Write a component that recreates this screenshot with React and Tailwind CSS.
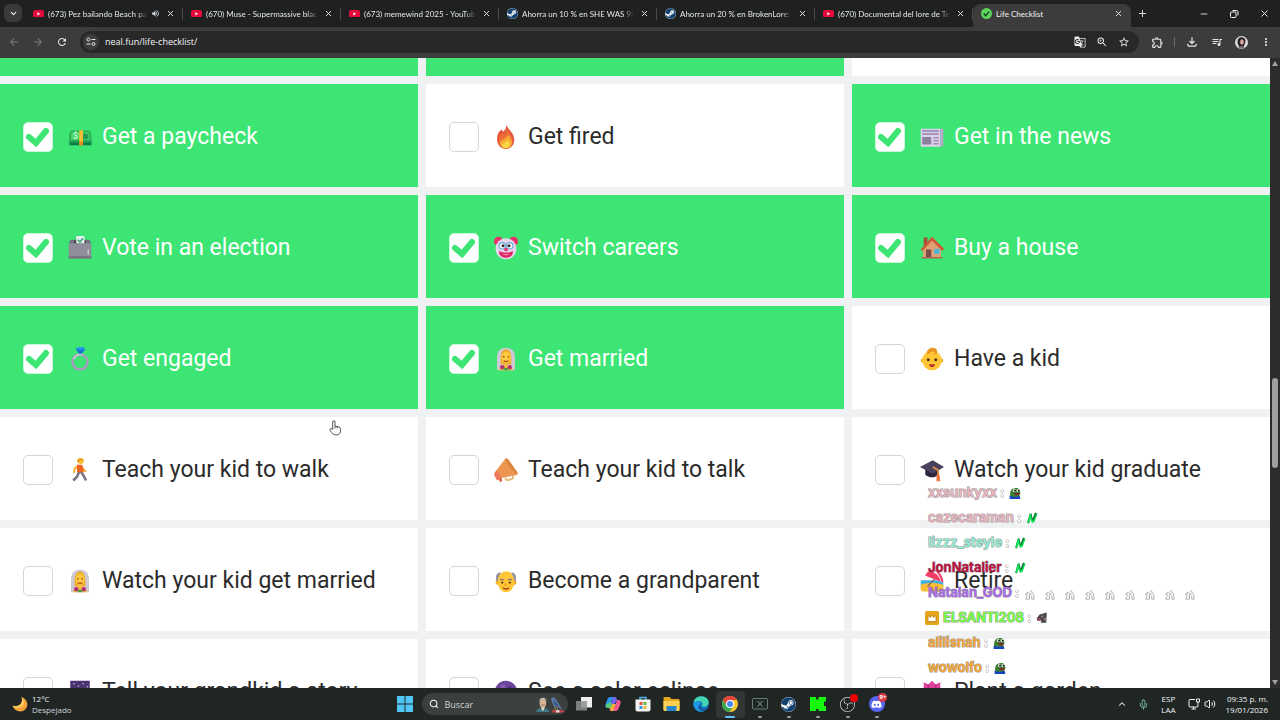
import { useState } from 'react'
import { ChevronDown, ChevronUp, Mic, Minus, Plus, Search, Volume2, X } from 'lucide-react'
import { FaDiscord, FaSteam } from 'react-icons/fa'
import {
  MdArrowBack,
  MdArrowForward,
  MdGTranslate,
  MdMoreVert,
  MdOutlineExtension,
  MdOutlineFileDownload,
  MdOutlineQueueMusic,
  MdRefresh,
  MdStarBorder,
  MdVolumeUp,
  MdZoomIn,
} from 'react-icons/md'
import { SiObsstudio } from 'react-icons/si'

const TABS = [
  { icon: 'youtube', title: '(673) Pez bailando Beach pa', audio: true },
  { icon: 'youtube', title: '(670) Muse - Supermassive blac' },
  { icon: 'youtube', title: '(673) memewind 2025 - YouTub' },
  { icon: 'steam', title: 'Ahorra un 10 % en SHE WAS 98' },
  { icon: 'steam', title: 'Ahorra un 20 % en BrokenLore:' },
  { icon: 'youtube', title: '(670) Documental del lore de Te' },
  { icon: 'check', title: 'Life Checklist', active: true },
]

const ITEMS = [
  { emoji: 'money', label: 'Get a paycheck', done: true },
  { emoji: 'fire', label: 'Get fired' },
  { emoji: 'news', label: 'Get in the news', done: true },
  { emoji: 'ballot', label: 'Vote in an election', done: true },
  { emoji: 'clown', label: 'Switch careers', done: true },
  { emoji: 'house', label: 'Buy a house', done: true },
  { emoji: 'ring', label: 'Get engaged', done: true },
  { emoji: 'bride', label: 'Get married', done: true },
  { emoji: 'baby', label: 'Have a kid' },
  { emoji: 'walk', label: 'Teach your kid to walk' },
  { emoji: 'megaphone', label: 'Teach your kid to talk' },
  { emoji: 'graduate', label: 'Watch your kid graduate' },
  { emoji: 'bride', label: 'Watch your kid get married' },
  { emoji: 'grandpa', label: 'Become a grandparent' },
  { emoji: 'beach', label: 'Retire' },
  { emoji: 'night', label: 'Tell your grandkid a story' },
  { emoji: 'eclipse', label: 'See a solar eclipse' },
  { emoji: 'tulip', label: 'Plant a garden' },
]

const CHAT = [
  { name: 'xxsunkyxx', color: 'text-[#e8b4c0]', emotes: ['frog'] },
  { name: 'cazecaraman', color: 'text-[#e8b4c0]', emotes: ['bolt'] },
  { name: 'lizzz_steyle', color: 'text-[#93ebd3]', emotes: ['bolt'] },
  { name: 'JonNatalier', color: 'text-[#bc1040]', emotes: ['bolt'] },
  { name: 'Natalan_GOD', color: 'text-[#a96be6]', emotes: Array(9).fill('dance') },
  { name: 'ELSANTI208', color: 'text-[#75fd46]', emotes: ['wolf'], badge: true },
  { name: 'alilisnah', color: 'text-[#f2a73a]', emotes: ['frog'] },
  { name: 'wowolfo', color: 'text-[#f2a73a]', emotes: ['frog'] },
]

const EMOJI = {
  money: (
    <>
      <path d="M2 12h29v15H2z" fill="#0b7a45" />
      <path d="M3 7h27l2 15H1z" fill="#35c45f" />
      <path d="M4 9h24l1 11H3z" fill="#4ad873" stroke="#239a4b" />
      <circle cx="23" cy="15" r="4" fill="#249a55" />
      <text x="7" y="19" fontSize="11" fill="#d8ffdf" fontFamily="Roboto">$</text>
      <path d="M15 7h5v20h-5z" fill="#f5bd35" />
      <path d="M15 22h5v5h-5z" fill="#e68a22" />
      <path d="M1 22h14v2H1zM20 22h12v2H20z" fill="#1d9b52" />
    </>
  ),
  fire: (
    <>
      <path d="M17 0c1 6 10 10 10 20 0 7-5 12-11 12S4 27 4 19c0-6 2-10 6-13l2 3c3-2 4-5 5-9z" fill="#e4573f" />
      <path d="M17 5c1 5 8 9 8 16 0 6-4 10-9 10s-10-3-10-9c0-4 2-7 5-11l3 2z" fill="#ee7038" />
      <path d="M19 13c2 3 5 7 5 10 0 5-3 8-8 8s-8-3-8-7c0-5 10-6 11-11z" fill="#f8a834" />
      <path d="M18 20c2 2 3 4 3 6 0 3-2 5-5 5s-5-2-5-4c0-3 6-4 7-7z" fill="#fdd545" />
    </>
  ),
  news: (
    <>
      <path d="M1 5h26v24H1z" fill="#ddd0ec" />
      <path d="M27 5h4v22l-2 2h-2z" fill="#b9a9cb" />
      <path d="M3 8h22M3 12h22" stroke="#9182a6" strokeWidth="2" />
      <path d="M3 16h12v10H3z" fill="#8d829e" />
      <path d="M18 17h7M18 21h7M18 25h7" stroke="#9d90b0" strokeWidth="2" />
    </>
  ),
  ballot: (
    <>
      <path d="M1 10 3 5h26l2 5z" fill="#777181" />
      <path d="M8 6h16v4H8z" fill="#47424f" />
      <path d="M11 0h11v10H11z" fill="#e9edf3" />
      <path d="m13 5 3 3 4-5" fill="none" stroke="#26a269" strokeWidth="2" />
      <path d="M1 10h30v20H1z" fill="#918c99" />
      <path d="M1 27h30v3H1z" fill="#77717f" />
      <path d="M26 18h2v7h-2z" fill="#c8c4cf" />
    </>
  ),
  clown: (
    <>
      <circle cx="6" cy="7" r="6" fill="#e93169" />
      <circle cx="26" cy="7" r="6" fill="#e93169" />
      <circle cx="16" cy="17" r="14" fill="#e7d5ee" />
      <circle cx="11" cy="13" r="5" fill="#64a9d8" />
      <circle cx="21" cy="13" r="5" fill="#64a9d8" />
      <circle cx="11" cy="13" r="3.5" fill="#fff" />
      <circle cx="21" cy="13" r="3.5" fill="#fff" />
      <circle cx="12" cy="13" r="2" fill="#38252e" />
      <circle cx="20" cy="13" r="2" fill="#38252e" />
      <circle cx="16" cy="18" r="2.5" fill="#ec356d" />
      <path d="M7 20c4 3 14 3 18 0 1 5-3 9-9 9s-10-4-9-9z" fill="#df2561" />
      <path d="M11 24c3 1 7 1 10 0-1 2-9 2-10 0z" fill="#fff" />
    </>
  ),
  house: (
    <>
      <path d="M5 2h5v11H5z" fill="#a84c3d" />
      <path d="M4 15 16 4l12 12v13H4z" fill="#dfa174" />
      <path d="M16 1 32 17l-2 3L16 6 3 20l-2-2z" fill="#cf5637" />
      <path d="M8 18h7v11H8z" fill="#7c4b4a" />
      <path d="M19 17h7v7h-7z" fill="#4cb5dc" />
      <path d="M2 28h28v2H2z" fill="#a96554" />
    </>
  ),
  ring: (
    <>
      <circle cx="16" cy="20" r="10" fill="none" stroke="#a99bbd" strokeWidth="3.5" />
      <path d="M8 16a10 10 0 0 1 11-6" fill="none" stroke="#ddd2ec" strokeWidth="2" />
      <path d="m10 2 4-2h7l2 3-5 6h-3z" fill="#249be8" />
      <path d="m10 2 5 2 8-1-5 6h-3z" fill="#1474cc" />
    </>
  ),
  bride: (
    <>
      <path d="M4 31V14C4 5 9 1 16 1s12 4 12 13v17z" fill="#cfc8d3" />
      <path d="M9 14c0-6 3-11 7-11s7 5 7 11v9H9z" fill="#edaa27" />
      <ellipse cx="16" cy="14" rx="6" ry="8" fill="#ffc83d" />
      <circle cx="13" cy="13" r="1" fill="#59331f" />
      <circle cx="19" cy="13" r="1" fill="#59331f" />
      <path d="M13 18c2 2 4 2 6 0" fill="none" stroke="#b34a1f" strokeWidth="1.5" />
      <path d="M7 31c0-5 4-8 9-8s9 3 9 8z" fill="#f5bd3a" />
      <circle cx="11" cy="27" r="3" fill="#b13573" />
      <circle cx="21" cy="27" r="3" fill="#b13573" />
      <path d="M12 28h8l-2 3h-4z" fill="#4b9c48" />
    </>
  ),
  baby: (
    <>
      <circle cx="4" cy="18" r="3" fill="#f6ab28" />
      <circle cx="28" cy="18" r="3" fill="#f6ab28" />
      <circle cx="16" cy="18" r="13" fill="#ffc636" />
      <path d="M9 9c-1-9 14-11 14-3 0 5-7 5-7 1 0 3 3 3 4 1-1-3-6-3-7 1z" fill="#e99620" />
      <circle cx="11" cy="17" r="2" fill="#50301f" />
      <circle cx="21" cy="17" r="2" fill="#50301f" />
      <path d="M12 23h8c0 5-8 5-8 0z" fill="#b9322e" />
    </>
  ),
  walk: (
    <>
      <path d="m15 18-3 7-5 5M17 18l4 6 3 6" fill="none" stroke="#7b7488" strokeWidth="3.5" />
      <path d="m14 10-5 4-1 6M18 11l3 5 3 2" fill="none" stroke="#f4a62a" strokeWidth="2.5" />
      <path d="M12 9h7l2 10h-9z" fill="#ef6323" />
      <circle cx="17" cy="4" r="4" fill="#ffc338" />
      <path d="M12 4c0-5 9-5 9 0l-5-1-2 4z" fill="#ed9a22" />
    </>
  ),
  megaphone: (
    <>
      <path d="M15 26c1 4 2 4 5 3l4-1q2-1 1-4" fill="none" stroke="#e7bd79" strokeWidth="2.5" />
      <path d="M15 1q2-1 4 1l12 17q1 3-2 4L8 27 2 18z" fill="#ec9650" />
      <path d="M15 1q2-1 4 1l12 17q1 2 0 3C24 18 18 10 15 1z" fill="#d9853f" />
      <path d="M0 22c1-4 3-5 5-5l5 9-6 4z" fill="#ee7859" />
      <path d="m6 28 2 4 3-1-1-5z" fill="#d76747" />
    </>
  ),
  graduate: (
    <>
      <path d="M7 13v9c4 5 14 5 18 0v-9z" fill="#2c253b" />
      <path d="M0 12 17 3l15 9-15 9z" fill="#49405b" />
      <path d="m17 12 7 4v8" fill="none" stroke="#f39345" strokeWidth="2" />
      <path d="M22 22h4l1 9h-5z" fill="#ed7941" />
    </>
  ),
  grandpa: (
    <>
      <circle cx="5" cy="18" r="3" fill="#f6ab28" />
      <circle cx="27" cy="18" r="3" fill="#f6ab28" />
      <path d="M3 16C1 7 6 4 9 5l-2 12zM29 16c2-9-3-12-6-11l2 12z" fill="#9b93a4" />
      <ellipse cx="16" cy="17" rx="11" ry="14" fill="#ffc636" />
      <path d="M8 15c1-2 4-2 5 0M19 15c1-2 4-2 5 0" fill="none" stroke="#8e7c7c" strokeWidth="2" />
      <circle cx="11" cy="18" r="1.5" fill="#50301f" />
      <circle cx="21" cy="18" r="1.5" fill="#50301f" />
      <path d="M15 19c-1 3 1 3 2 2" fill="none" stroke="#e58e1c" strokeWidth="1.5" />
      <path d="M12 25c2 2 6 2 8 0" fill="none" stroke="#a9401f" strokeWidth="2" />
    </>
  ),
  beach: (
    <>
      <path d="M1 15h30v10H1z" fill="#3dafe0" />
      <path d="M1 21c8-3 20-3 30 0v6q0 3-3 3H4q-3 0-3-3z" fill="#fbbf36" />
      <path d="m10 23 12-12" stroke="#8b6c66" strokeWidth="2" />
      <path d="M7 9C11-2 28-3 31 18z" fill="#f33d64" />
      <path d="M12 3c7 0 14 6 15 13l4 2C30 10 25 3 19 1z" fill="#f9e7ee" />
      <path d="M19 1c7 2 12 9 12 17l-3-2C27 10 24 5 19 1z" fill="#f33d64" />
    </>
  ),
  night: (
    <>
      <path d="M3 1h26v30H3z" fill="#4b3270" />
      <path d="M3 14h26v17H3z" fill="#342458" />
      <g fill="#d4bdf0">
        <circle cx="8" cy="5" r="1" />
        <circle cx="14" cy="8" r="1" />
        <circle cx="20" cy="5" r="1" />
        <circle cx="26" cy="9" r="1" />
        <circle cx="9" cy="12" r="1" />
        <circle cx="20" cy="12" r="1" />
      </g>
    </>
  ),
  eclipse: (
    <>
      <circle cx="16" cy="16" r="15" fill="#6d449b" />
      <circle cx="12" cy="9" r="3" fill="#875bb5" />
      <circle cx="21" cy="12" r="4" fill="#5c3788" />
    </>
  ),
  tulip: (
    <>
      <path d="M16 18v14" stroke="#3fa34d" strokeWidth="3" />
      <path d="M5 3l6 3 5-5 5 5 6-3v11c0 6-5 9-11 9S5 20 5 14z" fill="#e0409c" />
      <path d="M11 6v12M21 6v12" stroke="#b82a83" strokeWidth="2" />
    </>
  ),
}

const EMOTES = {
  frog: (
    <>
      <path d="M2 16c-1-7 1-14 8-14 6-2 9 3 9 8l-3 8H4z" fill="#3f7d35" />
      <circle cx="9" cy="6" r="2.5" fill="#e8efe4" />
      <circle cx="15" cy="6" r="2.5" fill="#e8efe4" />
      <circle cx="10" cy="6" r="1.5" />
      <circle cx="16" cy="6" r="1.5" />
      <path d="M8 10h10c0 5-8 6-10 0z" fill="#7d2a2e" />
      <path d="M1 14c5 3 12 3 17 1l1 5H1z" fill="#1345c4" />
    </>
  ),
  bolt: (
    <>
      <path d="M2 18 6 3l3-1 2 9 4-10 4 2-5 13-4 2-2-8-3 9z" fill="#087a35" />
      <path d="m3 17 4-14 3 12 3-1 5-12-4 14-4 1-3-8-2 8z" fill="#12ee5c" stroke="#12ee5c" />
    </>
  ),
  dance: (
    <g fill="none" stroke="#aaa" strokeWidth="1.5">
      <path d="M5 7c2-3 4-1 4 2v8H3l2-5z" />
      <path d="M11 10c0-5 5-5 5-1l1 8h-4v-6" />
      <path d="m2 10 3-4M10 4l4-1" />
    </g>
  ),
  wolf: (
    <>
      <path d="M1 11 6 4l12-3-1 17H8l1-4-6 1z" fill="#4b4549" />
      <path d="m8 7 5-2-2 5zM12 12l5-4v7z" fill="#8b8388" />
      <path d="m2 11 5-1 2 3-6 2z" fill="#a64b60" />
    </>
  ),
}

function YoutubeIcon() {
  return (
    <svg viewBox="0 0 20 14" className="w-[11px] shrink-0">
      <rect width="20" height="14" rx="4" fill="#e6093c" />
      <path d="m8 4 5 3-5 3z" fill="#fff" />
    </svg>
  )
}

function SteamIcon({ size }) {
  return (
    <span className="flex shrink-0 rounded-full bg-gray-100 text-[#12406f]">
      <FaSteam size={size} />
    </span>
  )
}

function CheckBadge() {
  return (
    <svg viewBox="0 0 24 24" className="size-[11px] shrink-0">
      <circle cx="12" cy="12" r="12" fill="#5cd35a" />
      <path d="m6 12 4 5 8-9" fill="none" stroke="#193c1d" strokeWidth="3" />
    </svg>
  )
}

function Tab({ tab }) {
  return (
    <div className={`relative flex h-[23px] w-[158px] min-w-0 items-center gap-1 pr-2 pb-1 pl-2 ${tab.active ? 'rounded-t-lg bg-[#3c3c3c]' : ''}`}>
      {tab.icon === 'youtube' && <YoutubeIcon />}
      {tab.icon === 'steam' && <SteamIcon size={11} />}
      {tab.icon === 'check' && <CheckBadge />}
      <a
        href="#"
        className={`min-w-0 flex-1 overflow-hidden font-[Lato,sans-serif] text-[8px] whitespace-nowrap ${tab.active ? 'text-gray-100' : 'mask-r-from-90% text-gray-200'}`}
      >
        {tab.title}
      </a>
      {tab.audio && <MdVolumeUp size={9} className="shrink-0 text-gray-300" />}
      <button aria-label="Cerrar pestaña" className="shrink-0 pl-[2px] text-gray-200">
        <X size={9} strokeWidth={2.5} />
      </button>
      {!tab.active && <span className="absolute right-0 h-3 w-px bg-[#484a49]" />}
    </div>
  )
}

function TabStrip() {
  return (
    <div className="flex h-[27px] shrink-0 items-end bg-[#1f2120]">
      <button aria-label="Buscar pestañas" className="mb-[5px] ml-1 flex size-[18px] shrink-0 items-center justify-center rounded-md bg-[#393b3a] text-gray-100">
        <ChevronDown size={9} strokeWidth={3} />
      </button>
      <div className="ml-[3px] flex min-w-0">
        {TABS.map((tab) => (
          <Tab key={tab.title} tab={tab} />
        ))}
      </div>
      <button aria-label="Nueva pestaña" className="mb-2 ml-[6px] text-gray-200">
        <Plus size={11} />
      </button>
      <div className="mb-2 ml-auto flex shrink-0 gap-5 pr-[10px] text-gray-100">
        <button aria-label="Minimizar"><Minus size={10} /></button>
        <button aria-label="Restaurar">
          <svg viewBox="0 0 20 20" className="size-[10px]" fill="none" stroke="currentColor" strokeWidth="2">
            <rect x="3" y="6" width="11" height="11" rx="2" />
            <path d="M7 3h8q3 0 3 3v7" />
          </svg>
        </button>
        <button aria-label="Cerrar"><X size={11} /></button>
      </div>
    </div>
  )
}

function Toolbar() {
  return (
    <div className="flex h-[31px] shrink-0 items-center bg-[#3c3c3c] px-2 pb-px text-gray-200">
      <div className="flex gap-3">
        <button aria-label="Atrás" className="text-[#7c7c7c]"><MdArrowBack size={12} /></button>
        <button aria-label="Adelante" className="text-[#7c7c7c]"><MdArrowForward size={12} /></button>
        <button aria-label="Recargar"><MdRefresh size={12} /></button>
      </div>
      <div className="ml-3 flex h-[22px] min-w-0 flex-1 items-center rounded-full bg-[#282828] pr-[9px] pl-[3px]">
        <button aria-label="Información del sitio" className="flex size-4 items-center justify-center rounded-full bg-[#3c3c3c]">
          <svg viewBox="0 0 20 20" className="size-[10px]" fill="none" stroke="currentColor" strokeWidth="2">
            <circle cx="5" cy="5" r="3" />
            <circle cx="15" cy="14" r="3" />
            <path d="M11 5h8M1 14h8" />
          </svg>
        </button>
        <input
          aria-label="Dirección"
          defaultValue="neal.fun/life-checklist/"
          className="ml-[6px] min-w-0 flex-1 bg-transparent text-[9px] text-gray-100 outline-none"
        />
        <div className="flex gap-[10px]">
          <button aria-label="Traducir"><MdGTranslate size={12} /></button>
          <button aria-label="Zoom"><MdZoomIn size={12} /></button>
          <button aria-label="Favoritos"><MdStarBorder size={12} /></button>
        </div>
      </div>
      <div className="ml-3 flex items-center gap-3">
        <button aria-label="Extensiones"><MdOutlineExtension size={13} /></button>
        <span className="-mx-[2px] h-[10px] w-px bg-[#6a6a6a]" />
        <button aria-label="Descargas"><MdOutlineFileDownload size={14} /></button>
        <button aria-label="Multimedia"><MdOutlineQueueMusic size={12} /></button>
        <button aria-label="Perfil">
          <svg viewBox="0 0 28 28" className="size-[13px]">
            <circle cx="14" cy="14" r="14" fill="#dcd9dd" />
            <path d="M6 17C4 5 10 1 16 3c7 1 8 8 5 14l-3 8h-8z" fill="#29232a" />
            <ellipse cx="15" cy="13" rx="4" ry="6" fill="#dba79b" />
            <path d="M8 26c1-6 11-6 13 0-4 2-9 2-13 0z" fill="#7e6974" />
          </svg>
        </button>
        <button aria-label="Menú"><MdMoreVert size={12} /></button>
      </div>
    </div>
  )
}

function Tile({ item }) {
  const [done, setDone] = useState(Boolean(item.done))

  return (
    <label className={`flex h-[103px] items-center pt-[3px] pl-[23px] ${done ? 'bg-[#3ce574] text-white' : 'bg-white text-[#2b2b2b]'}`}>
      <span className="relative flex size-[30px] shrink-0">
        <input
          type="checkbox"
          checked={done}
          onChange={() => setDone(!done)}
          className="size-[30px] appearance-none rounded-[5px] border border-[#d5d5d5] bg-white checked:border-[#c9f5d8]"
        />
        {done && (
          <svg viewBox="0 0 30 30" className="pointer-events-none absolute inset-0">
            <path d="m6 15 7 6L23 9" fill="none" stroke="#3ce574" strokeWidth="6" strokeLinecap="round" />
          </svg>
        )}
      </span>
      <svg viewBox="0 0 32 32" className="ml-[15px] size-6 shrink-0">{EMOJI[item.emoji]}</svg>
      <span className="ml-[10px] font-[Roboto,sans-serif] text-[23px]">{item.label}</span>
    </label>
  )
}

function ScrollBar() {
  return (
    <div className="flex w-[10px] shrink-0 flex-col items-center bg-[#2c2c2c] py-[3px]">
      <span className="border-x-[3px] border-b-[5px] border-x-transparent border-b-[#a0a0a0]" />
      <span className="flex-[31]" />
      <span className="h-[90px] w-[6px] rounded-full bg-[#9f9f9f]" />
      <span className="flex-[21]" />
      <span className="border-x-[3px] border-t-[5px] border-x-transparent border-t-[#a0a0a0]" />
    </div>
  )
}

const OUTLINE = '[-webkit-text-stroke:1px_rgb(90_90_90/0.65)] [paint-order:stroke_fill]'

function Chat() {
  return (
    <ul className="pointer-events-none absolute right-0 bottom-2 w-[355px] font-[Inter,sans-serif] text-[13px] font-bold">
      {CHAT.map((line) => (
        <li key={line.name} className={`flex h-[25px] items-center ${line.badge ? '' : 'pl-[3px]'}`}>
          {line.badge && (
            <svg viewBox="0 0 28 28" className="mr-1 size-[14px]">
              <rect width="28" height="28" rx="3" fill="#e5a51b" />
              <path d="M6 9l5 4 3-5 3 5 5-4v12H6z" fill="#fff" stroke="#b87d14" strokeWidth="1.5" />
            </svg>
          )}
          <span className={`${line.color} ${OUTLINE}`}>{line.name}</span>
          <span className={`ml-[3px] text-white ${OUTLINE}`}>:</span>
          <span className={`ml-[5px] flex ${line.emotes.length > 1 ? 'gap-2 pt-1' : ''}`}>
            {line.emotes.map((name, i) => (
              <svg key={i} viewBox="0 0 20 20" className="size-3">{EMOTES[name]}</svg>
            ))}
          </span>
        </li>
      ))}
    </ul>
  )
}

function Pointer() {
  return (
    <svg viewBox="0 0 26 34" className="pointer-events-none absolute top-[362px] left-[329px] h-4 w-3">
      <path
        d="M8 20V4c0-4 5-4 5 0v9l9 2c3 1 3 3 3 6 0 7-3 11-9 11-7 0-9-3-14-10-2-3 2-5 4-3z"
        fill="#fff"
        stroke="#444"
        strokeWidth="2"
      />
      <path d="M13 13v5M18 14v4" stroke="#444" strokeWidth="2" />
    </svg>
  )
}

const APPS = [
  {
    name: 'Vista de tareas',
    icon: (
      <svg viewBox="0 0 32 32" className="size-4">
        <path d="M10 2h22v21H10z" fill="#eee" />
        <path d="M0 10h22v19H0z" fill="#8e9190" opacity=".85" />
      </svg>
    ),
  },
  {
    name: 'Copilot',
    icon: (
      <svg viewBox="0 0 32 32" className="size-4">
        <path d="M11 2h10l3 7H13L8 24H5c-4 0-5-4-4-7l4-11q2-4 6-4z" fill="#2997eb" />
        <path d="M11 12h6l-5 12H6c-4 0-5-3-4-7z" fill="#58cc75" />
        <path d="M21 2h-5l-4 14h7l5-7c-1-4-1-7-3-7z" fill="#7566e8" />
        <path d="M21 30H11l-3-6h11l5-16h3c4 0 5 4 4 7l-4 11q-2 4-6 4z" fill="#f25791" />
        <path d="M11 30h5l6-14h-7l-4 8z" fill="#f6b23c" />
      </svg>
    ),
  },
  {
    name: 'Microsoft Store',
    icon: (
      <svg viewBox="0 0 32 32" className="size-4">
        <path d="M10 8V3h12v5" fill="none" stroke="#4fb4f0" strokeWidth="3" />
        <path d="M1 7h30v20q0 4-4 4H5q-4 0-4-4z" fill="#f4f4f4" />
        <path d="M9 12h6v6H9z" fill="#e7533a" />
        <path d="M17 12h6v6h-6z" fill="#70b33e" />
        <path d="M9 20h6v6H9z" fill="#2e99df" />
        <path d="M17 20h6v6h-6z" fill="#f1b92b" />
      </svg>
    ),
  },
  {
    name: 'Explorador de archivos',
    icon: (
      <svg viewBox="0 0 34 32" className="h-4 w-[17px]">
        <path d="M1 4q0-2 2-2h10l4 4h14q2 0 2 2v20H1z" fill="#e4a51f" />
        <path d="M1 10h32v18q0 2-2 2H3q-2 0-2-2z" fill="#fcd152" />
        <path d="M7 20h20v10H7z" fill="#2785d0" />
      </svg>
    ),
  },
  {
    name: 'Edge',
    icon: (
      <svg viewBox="0 0 32 32" className="size-4">
        <circle cx="16" cy="16" r="15.5" fill="#1573c8" />
        <path d="M1 14C2 6 8 .5 16 .5c9 0 15.5 6 15.5 12 0 6-5 9-10 9-3 0-4-2-3-4 2-4-3-8-8-7-4 0-7 1-9.5 3.5z" fill="#43d5b0" />
        <path d="M1 14c5-5 13-4 14 1-3 3-3 12 6 16C8 34 0 24 1 14z" fill="#2196e5" />
        <path d="M14 16c-2 7 5 11 14 8-3 4-7 6-11 6-8-4-8-11-3-14z" fill="#125a9e" />
      </svg>
    ),
  },
  {
    name: 'Chrome',
    active: true,
    icon: (
      <svg viewBox="0 0 32 32" className="size-4">
        <circle cx="16" cy="16" r="16" fill="#f9c72f" />
        <path d="M2 8a16 16 0 0 1 28 0H16l-7 12z" fill="#e5443a" />
        <path d="M2 8a16 16 0 0 0 13 24l8-12H9z" fill="#3aa757" />
        <circle cx="16" cy="16" r="8" fill="#fff" />
        <circle cx="16" cy="16" r="6" fill="#4285f4" />
      </svg>
    ),
  },
  {
    name: 'Xbox',
    running: true,
    icon: (
      <svg viewBox="0 0 32 24" className="h-3 w-4" fill="none">
        <rect x="1" y="1" width="30" height="21" rx="2" stroke="#628476" strokeWidth="2" />
        <path d="m11 6 10 11M21 6 11 17" stroke="#82a697" strokeWidth="2" />
      </svg>
    ),
  },
  { name: 'Steam', running: true, icon: <SteamIcon size={15} /> },
  {
    name: 'Kick',
    running: true,
    icon: (
      <svg viewBox="0 0 32 28" className="h-[14px] w-4">
        <path d="M0 0h12v5h5V0h15v9h-4v9h4v10H17v-4h-5v4H0z" fill="#14fb0c" />
      </svg>
    ),
  },
  {
    name: 'OBS',
    running: true,
    icon: <SiObsstudio size={15} className="text-gray-300" />,
    badge: <span className="absolute top-[3px] right-1 size-2 rounded-full bg-[#f00000]" />,
  },
  {
    name: 'Discord',
    running: true,
    icon: (
      <span className="flex size-4 items-center justify-center rounded-full bg-[#5865f2] text-white">
        <FaDiscord size={11} />
      </span>
    ),
    badge: (
      <span className="absolute top-[2px] right-1 flex size-[9px] items-center justify-center rounded-full bg-[#d93b46] text-[6px] font-bold text-white">
        9+
      </span>
    ),
  },
]

function Taskbar() {
  return (
    <footer className="flex h-8 shrink-0 items-center bg-[#202624] text-[8px] leading-[11px] text-gray-100">
      <div className="flex flex-1 items-center gap-1 pl-3">
        <svg viewBox="0 0 32 32" className="size-4">
          <path d="M19 2c14 5 15 21 5 27C15 34 4 29 1 19c10 4 23-3 18-17z" fill="#f5a13a" />
          <path d="M19 2c8 7 7 21-5 22-6 1-10-1-13-5 10 4 23-3 18-17z" fill="#fbc65d" />
        </svg>
        <div>
          <p>12°C</p>
          <p className="text-gray-300">Despejado</p>
        </div>
      </div>

      <div className="flex items-center pl-[3px]">
        <button aria-label="Inicio" className="flex w-[26px] justify-center">
          <svg viewBox="0 0 32 32" className="size-4" fill="#4fc6f5">
            <path d="M0 0h15v15H0zM17 0h15v15H17zM0 17h15v15H0zM17 17h15v15H17z" />
          </svg>
        </button>
        <div className="mr-[2px] ml-1 flex h-[22px] w-[146px] items-center rounded-full bg-[#3b403e] pr-1 pl-[7px]">
          <Search size={10} strokeWidth={2.5} className="shrink-0" />
          <input
            aria-label="Buscar"
            placeholder="Buscar"
            className="ml-[6px] min-w-0 flex-1 bg-transparent text-[9px] outline-none placeholder:text-gray-300"
          />
          <svg viewBox="0 0 60 36" className="h-[17px] w-[29px] shrink-0">
            <path d="M2 34c1-8 6-9 13-9s13 2 15 9z" fill="#3e7480" />
            <path d="m12 24 4 9 4-9z" fill="#e8e4da" />
            <ellipse cx="16" cy="15" rx="7" ry="11" fill="#d9b493" />
            <path d="M8 12C7 2 24 0 25 12l-3-5H11z" fill="#b9bcbe" />
            <path d="M12 19h8" stroke="#8c7567" strokeWidth="2" />
            <path d="m33 5 5-3 5 4 9 14 5 9-9-5-9-2-4-9z" fill="#5777a3" />
            <path d="m39 9 12 14-10-4z" fill="#34527d" />
            <path d="M36 30h24v5H36z" fill="#c34246" />
            <path d="M42 22v9M47 24v7" stroke="#c9a15a" strokeWidth="1.5" />
            <path d="M44 30h7v5h-7z" fill="#e9dcd6" />
          </svg>
        </div>
        <div className="flex w-[322px]">
          {APPS.map((app) => (
            <button
              key={app.name}
              aria-label={app.name}
              className={`relative flex h-[27px] flex-1 items-center justify-center rounded ${app.active ? 'bg-[#313735]' : ''}`}
            >
              {app.icon}
              {app.badge}
              {app.active && <span className="absolute bottom-0 h-[2px] w-[10px] rounded-full bg-[#62c3f3]" />}
              {app.running && <span className="absolute bottom-0 h-[2px] w-1 rounded-full bg-[#9a9d9c]" />}
            </button>
          ))}
        </div>
      </div>

      <div className="flex flex-1 items-center justify-end pr-3">
        <ChevronUp size={10} strokeWidth={2.5} />
        <Mic size={11} className="ml-[11px] text-[#7fc4b2]" />
        <div className="ml-3 text-center">
          <p>ESP</p>
          <p>LAA</p>
        </div>
        <svg viewBox="0 0 24 24" className="ml-3 size-3" fill="none" stroke="currentColor" strokeWidth="2">
          <path d="M14 3H4Q2 3 2 5v11q0 2 2 2h14q2 0 2-2v-3M7 22h9M11 18v4" />
          <path d="M17 2h6v6h-6zM20 8v5" />
        </svg>
        <Volume2 size={12} className="ml-1" />
        <div className="ml-[10px] text-right">
          <p>09:35 p. m.</p>
          <p>19/01/2026</p>
        </div>
      </div>
    </footer>
  )
}

export default function App() {
  return (
    <div className="flex h-screen flex-col overflow-hidden font-['Open_Sans',sans-serif]">
      <TabStrip />
      <Toolbar />

      <main className="relative flex min-h-0 flex-1 overflow-hidden bg-[#f0f1f3]">
        <div className="grid min-w-0 flex-1 auto-rows-max grid-cols-3 gap-2 overflow-hidden">
          {/* bottom edge of the row above */}
          <div className="h-[18px] bg-[#3ce574]" />
          <div className="h-[18px] bg-[#3ce574]" />
          <div className="h-[18px] bg-white" />
          {ITEMS.map((item) => (
            <Tile key={item.label} item={item} />
          ))}
        </div>
        <ScrollBar />
        <Pointer />
        <Chat />
      </main>

      <Taskbar />
    </div>
  )
}
